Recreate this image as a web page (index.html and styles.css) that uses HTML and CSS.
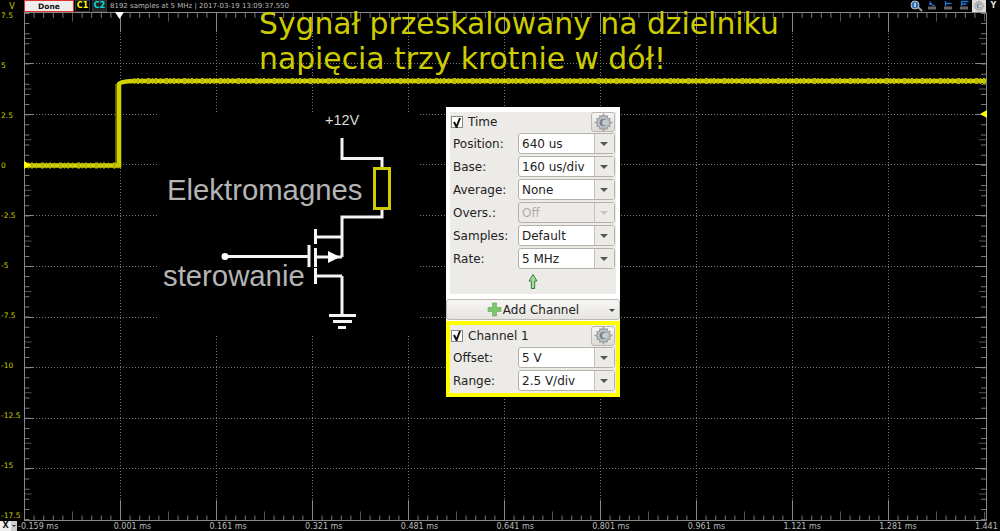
FILE: index.html
```html
<!DOCTYPE html>
<html>
<head>
<title>Oscilloscope</title>
<link rel="stylesheet" href="styles.css">
</head>
<body>
	<div class="scope">
		<div class="topbar">
			<span class="unit">V</span>
			<button class="done">Done</button>
			<span class="chan c1">C1</span>
			<span class="chan c2">C2</span>
			<span class="status">8192 samples at 5 MHz | 2017-03-19 13:09:37.550</span>
			<div class="tools">
				<svg width="62" height="12" viewBox="0 0 62 12">
					<path d="M9 7l4 4" stroke="#999" stroke-width="2"/>
					<circle cx="6" cy="5" r="4" fill="#2f6fb0" stroke="#b8c8d8"/>
					<path d="M6 3v4" stroke="#fff" stroke-width="1.200"/>
					<path d="M21 1.500l1 3 4 1.500M20 4h3" stroke="#1e78d2" stroke-width="1.300" fill="none"/>
					<rect x="19" y="6.500" width="8" height="3" fill="#666"/>
					<path d="M36.500 1v5M36.500 3.500h6" stroke="#1e78d2" stroke-width="1.300" fill="none"/>
					<rect x="35" y="6.500" width="8" height="3" fill="#666"/>
					<path d="M52.500 1v5M52.500 1.500h7M52.500 4h5" stroke="#1e78d2" stroke-width="1.300" fill="none"/>
					<rect x="51" y="6.500" width="8" height="3" fill="#666"/>
				</svg>
				<span class="gearbtn">
					<svg width="12" height="12" viewBox="0 0 16 16"><use href="#gear"/></svg>
				</span>
				<span class="ybtn">Y</span>
			</div>
		</div>
		<div class="middle">
			<div class="yaxis">
				<span>7.5</span><span>5</span><span>2.5</span><span>0</span><span>-2.5</span><span>-5</span><span>-7.5</span><span>-10</span><span>-12.5</span><span>-15</span><span>-17.5</span>
			</div>
			<svg class="plot" width="963" height="509" viewBox="24 12 963 509">
				<defs>
					<symbol id="gear" viewBox="0 0 16 16">
						<path d="M8 1l1 2 2-.6.4 2.100 2.100.4-.6 2 2 1.100-2 1 .6 2-2.100.5-.4 2-2-.6-1 2-1-2-2 .6-.4-2-2.100-.5.6-2-2-1 2-1.100-.6-2 2.100-.4.4-2.100 2 .6z" fill="#bfc2c4" stroke="#9a9da0"/>
						<circle cx="8" cy="8" r="3.200" fill="#75838f"/>
						<circle cx="9.300" cy="8" r="2.400" fill="#c8cccf"/>
					</symbol>
				</defs>
				<g class="grid">
					<path d="M120.500 12V520M216.500 12V520M312.500 12V520M408.500 12V520M504.500 12V520M600.500 12V520M696.500 12V520M792.500 12V520M888.500 12V520"/>
					<path d="M24 63.500H986M24 114.500H986M24 164.500H986M24 215.500H986M24 266.500H986M24 317.500H986M24 367.500H986M24 418.500H986M24 468.500H986"/>
				</g>
				<rect x="157" y="113" width="261" height="222" fill="#000"/>
				<g class="ticks">
					<path class="minor" d="M24 15.500H986M24 518H986" stroke-width="5" stroke-dasharray="1 8.600"/>
					<path class="mid" d="M24 17H986M24 516H986" stroke-width="9" stroke-dasharray="1 47"/>
					<path class="major" d="M120.500 12V32M216.500 12V32M312.500 12V32M408.500 12V32M504.500 12V32M600.500 12V32M696.500 12V32M792.500 12V32M888.500 12V32"/>
					<path class="major" d="M120.500 520V500M216.500 520V500M312.500 520V500M408.500 520V500M504.500 520V500M600.500 520V500M696.500 520V500M792.500 520V500M888.500 520V500"/>
					<path class="minor" d="M27 13V520M983.500 13V520" stroke-width="5" stroke-dasharray="1 9.120"/>
					<path class="mid" d="M28 38V520M982.500 38V520" stroke-width="7" stroke-dasharray="1 49.600"/>
					<path class="major" d="M24 63.500H34M24 114.500H34M24 164.500H34M24 215.500H34M24 266.500H34M24 317.500H34M24 367.500H34M24 418.500H34M24 468.500H34"/>
					<path class="major" d="M986 63.500H976M986 114.500H976M986 164.500H976M986 215.500H976M986 266.500H976M986 317.500H976M986 367.500H976M986 418.500H976M986 468.500H976"/>
				</g>
				<path class="frame" d="M24.500 521V12.500H986.500V520.500H24"/>
				<path class="ghost" d="M116 165V84"/>
				<path class="trace" d="M24 165.500H119V84Q119.500 81.500 134 81H986"/>
				<path class="noise" d="M134 81H986"/>
				<path class="noise" d="M28 165.500H119"/>
				<path d="M115 12h9l-4.500 7z" fill="#fff"/>
				<path d="M24 161v8l7-4z" fill="#ffff00"/>
				<path d="M987 110v8l-7-4z" fill="#ffff00"/>
				<path class="circuit" d="M342 138V158.500H382V167M382 209V217H342V257M342 237H316M342 257H316M342 276H316M342 276V315"/>
				<path class="circuit" d="M315.500 229V244M315.500 248V267M315.500 268V284M309 245V267"/>
				<path class="circuit" d="M225 256.500H309"/>
				<path class="circuit" d="M329 315.500H356M333 321.500H352M338 327.500H346"/>
				<circle cx="225" cy="256.500" r="3.500" fill="#fff"/>
				<path d="M328 251l12 6-12 6z" fill="#fff"/>
				<rect class="coil" x="374.500" y="168.500" width="15" height="40"/>
				<text class="plus" x="325" y="125">+12V</text>
				<text class="label" x="167" y="200">Elektromagnes</text>
				<text class="label" x="163" y="286">sterowanie</text>
			</svg>
		</div>
		<div class="xaxis">
			<span class="xbtn">X</span>
			<span class="xarrow"></span>
			<div class="xlabels">
				<span>-0.159 ms</span><span>0.001 ms</span><span>0.161 ms</span><span>0.321 ms</span><span>0.481 ms</span><span>0.641 ms</span><span>0.801 ms</span><span>0.961 ms</span><span>1.121 ms</span><span>1.281 ms</span><span>1.441 ms</span>
			</div>
		</div>
		<p class="note">Sygnał przeskalowany na dzielniku<br>napięcia trzy krotnie w dół!</p>
		<div class="panel">
			<section class="group">
				<div class="group-head">
					<span class="check"><svg width="10" height="11" viewBox="0 0 10 11"><path d="M2 5l2.500 5L8 1" fill="none" stroke="#111" stroke-width="2"/></svg></span>
					<span>Time</span>
					<span class="gearbtn big"><svg width="19" height="19" viewBox="0 0 16 16"><use href="#gear"/></svg></span>
				</div>
				<div class="row"><label>Position:</label><div class="combo">640 us</div></div>
				<div class="row"><label>Base:</label><div class="combo">160 us/div</div></div>
				<div class="row"><label>Average:</label><div class="combo">None</div></div>
				<div class="row"><label>Overs.:</label><div class="combo off">Off</div></div>
				<div class="row"><label>Samples:</label><div class="combo">Default</div></div>
				<div class="row"><label>Rate:</label><div class="combo">5 MHz</div></div>
				<div class="up"><svg width="10" height="15" viewBox="0 0 10 15"><path d="M5 .5L9 7H6.700V14.500H3.300V7H1z" fill="#a3dc98" stroke="#2f7f3c"/></svg></div>
			</section>
			<button class="add">
				<svg width="15" height="15" viewBox="0 0 15 15"><path d="M5.500 1h4v4.500H14v4H9.500V14h-4V9.500H1v-4h4.500z" fill="#7cc46e" stroke="#5fa653" stroke-width=".6"/></svg>
				<span>Add Channel</span>
				<i class="caret"></i>
			</button>
			<section class="group channel">
				<div class="group-head">
					<span class="check"><svg width="10" height="11" viewBox="0 0 10 11"><path d="M2 5l2.500 5L8 1" fill="none" stroke="#111" stroke-width="2"/></svg></span>
					<span>Channel 1</span>
					<span class="gearbtn big"><svg width="19" height="19" viewBox="0 0 16 16"><use href="#gear"/></svg></span>
				</div>
				<div class="row"><label>Offset:</label><div class="combo">5 V</div></div>
				<div class="row"><label>Range:</label><div class="combo">2.5 V/div</div></div>
			</section>
		</div>
	</div>
</body>
</html>
```
FILE: styles.css
```css
html, body {
	margin: 0;
	height: 100%;
	background: #000;
}
body {
	font-family: "DejaVu Sans", sans-serif;
	overflow: hidden;
}
.scope {
	position: relative;
	width: 1000px;
	height: 531px;
	display: flex;
	flex-direction: column;
	background: #000;
	overflow: hidden;
}
.topbar {
	height: 12px;
	display: flex;
	align-items: center;
	font-size: 7px;
	color: #bbb;
}
.unit {
	width: 24px;
	text-align: center;
	color: #cccc00;
	font-size: 8px;
}
.done {
	width: 50px;
	height: 12px;
	padding: 0;
	box-sizing: border-box;
	border: 1px solid #e03030;
	background: #efedeb;
	color: #111;
	font: bold 7.500px "DejaVu Sans", sans-serif;
}
.chan {
	width: 15px;
	height: 12px;
	line-height: 10px;
	margin-left: 2px;
	box-sizing: border-box;
	border: 1px solid #333;
	text-align: center;
	font-size: 8px;
	font-weight: bold;
}
.c1 { color: #ffff00; margin-left: 1px; }
.c2 { color: #00e0e0; background: #222; }
.status {
	margin-left: 3px;
	white-space: nowrap;
}
.tools {
	margin-left: auto;
	display: flex;
	align-items: center;
}
.tools > svg {
	margin-right: 1px;
}
.gearbtn {
	width: 14px;
	height: 12px;
	display: flex;
	align-items: center;
	justify-content: center;
	background: #dcdcdc;
}
.ybtn {
	width: 13px;
	height: 12px;
	line-height: 12px;
	margin-left: 1px;
	text-align: center;
	color: #ddd;
	font-weight: bold;
	font-size: 8px;
}
.middle {
	height: 509px;
	display: flex;
}
.yaxis {
	width: 24px;
	height: 508px;
	flex: none;
	display: flex;
	flex-direction: column;
	justify-content: space-between;
	color: #cccc00;
	font-size: 7.500px;
}
.yaxis span {
	line-height: 8px;
	padding-left: 1px;
}
.plot {
	display: block;
	flex: none;
}
.grid path {
	fill: none;
	stroke: #777;
	stroke-dasharray: 1 2;
}
.frame {
	fill: none;
	stroke: #888;
}
.ticks path {
	fill: none;
}
.ticks .major {
	stroke: #888;
}
.ticks .mid {
	stroke: #555;
}
.ticks .minor {
	stroke: #777;
}
.ghost {
	fill: none;
	stroke: #555500;
	stroke-width: 2;
}
.trace {
	fill: none;
	stroke: #d2d200;
	stroke-width: 4.500;
}
.noise {
	fill: none;
	stroke: #b8b800;
	stroke-width: 6;
	stroke-dasharray: 1 2 2 3 1 4 3 2;
}
.circuit {
	fill: none;
	stroke: #f4f4f4;
	stroke-width: 3;
}
.coil {
	fill: none;
	stroke: #cccc00;
	stroke-width: 3;
}
.plus {
	fill: #ddd;
	font: 14.500px "Liberation Sans", sans-serif;
}
.label {
	fill: #b4b4b4;
	font: 29.300px "Liberation Sans", sans-serif;
}
.xaxis {
	height: 10px;
	display: flex;
	align-items: center;
	font-size: 8px;
	color: #bbb;
}
.xbtn {
	flex: none;
	width: 11px;
	height: 10px;
	line-height: 10px;
	text-align: center;
	background: #eee;
	color: #111;
	font-weight: bold;
	font-size: 8px;
}
.xarrow {
	position: relative;
	flex: none;
	width: 6px;
	height: 10px;
	background: #ccc;
}
.xarrow::after {
	content: "";
	position: absolute;
	left: 1px;
	top: 4px;
	border: 2px solid transparent;
	border-top-color: #333;
	border-bottom: 0;
}
.xlabels {
	flex: none;
	display: flex;
	padding-left: 1px;
	white-space: nowrap;
}
.xlabels span {
	width: 95.700px;
	flex: none;
}
.note {
	position: absolute;
	left: 259px;
	top: 6px;
	margin: 0;
	color: #cccc00;
	font-size: 29.800px;
	line-height: 35px;
	white-space: nowrap;
}
.panel {
	position: absolute;
	left: 446px;
	top: 107px;
	width: 174px;
	height: 290px;
	background: #fff;
	display: flex;
	flex-direction: column;
	font-size: 12px;
	color: #222;
}
.group {
	margin: 5px 4px 0;
	height: 182px;
	background: #edebe8;
	box-sizing: border-box;
}
.group-head {
	height: 20px;
	margin-bottom: 1px;
	display: flex;
	align-items: center;
	gap: 5px;
	padding: 0 1px;
}
.check {
	width: 12px;
	height: 12px;
	display: flex;
	align-items: center;
	justify-content: center;
	box-sizing: border-box;
	background: #fff;
	border: 1px solid #8a8780;
}
.gearbtn.big {
	width: 24px;
	height: 20px;
	margin-left: auto;
	border: 1px solid #bbb8b2;
	border-radius: 3px;
	background: linear-gradient(#f6f5f3, #dcdad6);
	box-sizing: border-box;
}
.row {
	height: 21px;
	margin-bottom: 2px;
	display: flex;
	align-items: center;
	padding: 0 1px 0 3px;
}
.row label {
	width: 65px;
}
.combo {
	position: relative;
	flex: 1;
	height: 21px;
	line-height: 20px;
	padding-left: 3px;
	box-sizing: border-box;
	background: #fff;
	border: 1px solid #b5b2ac;
	border-radius: 3px;
}
.combo::after {
	content: "";
	position: absolute;
	right: 0;
	top: 0;
	bottom: 0;
	width: 20px;
	background: #edebe8;
	border-left: 1px solid #c5c2bc;
	box-sizing: border-box;
}
.combo::before {
	content: "";
	position: absolute;
	z-index: 1;
	right: 6px;
	top: 8px;
	border: 4px solid transparent;
	border-top-color: #555;
	border-bottom: 0;
}
.combo.off {
	background: #edebe8;
	color: #b0aea9;
}
.combo.off::before {
	border-top-color: #c5c3be;
}
.up {
	height: 16px;
	padding-top: 3px;
	display: flex;
	justify-content: center;
}
.add {
	position: relative;
	margin-top: 5px;
	height: 21px;
	padding: 0;
	display: flex;
	align-items: center;
	justify-content: center;
	gap: 1px;
	background: linear-gradient(#f7f6f4, #e6e4e0);
	border: 1px solid #bdbab4;
	border-radius: 3px;
	font: 12px "DejaVu Sans", sans-serif;
	color: #222;
}
.caret {
	position: absolute;
	right: 4px;
	top: 9px;
	border: 3px solid transparent;
	border-top-color: #444;
	border-bottom: 0;
}
.group.channel {
	margin: 1px 0 0;
	height: 76px;
	border: 4px solid #ffff00;
}
.channel .group-head {
	height: 21px;
}
```
